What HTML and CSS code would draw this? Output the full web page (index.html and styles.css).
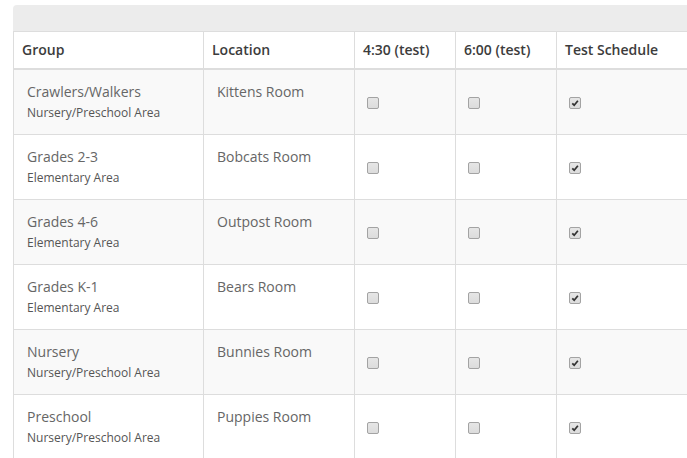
FILE: index.html
```html
<!DOCTYPE html>
<html>
<head>
<meta charset="utf-8">
<link rel="stylesheet" href="styles.css">
</head>
<body>
<div class="panel">
  <div class="panel-head"></div>
  <table class="grid">
    <colgroup>
      <col class="c-group"><col class="c-loc"><col class="c-time"><col class="c-time"><col class="c-test">
    </colgroup>
    <thead>
      <tr><th>Group</th><th>Location</th><th>4:30 (test)</th><th>6:00 (test)</th><th>Test Schedule</th></tr>
    </thead>
    <tbody>
      <tr class="odd">
        <td><div class="name">Crawlers/Walkers</div><div class="area">Nursery/Preschool Area</div></td>
        <td><div class="name">Kittens Room</div></td>
        <td class="chk"><span class="box"></span></td>
        <td class="chk"><span class="box"></span></td>
        <td class="chk"><span class="box on"><svg viewBox="0 0 10 10"><path d="M1.6 5.4 L4 7.8 L8.6 2.2" /></svg></span></td>
      </tr>
      <tr>
        <td><div class="name">Grades 2-3</div><div class="area">Elementary Area</div></td>
        <td><div class="name">Bobcats Room</div></td>
        <td class="chk"><span class="box"></span></td>
        <td class="chk"><span class="box"></span></td>
        <td class="chk"><span class="box on"><svg viewBox="0 0 10 10"><path d="M1.6 5.4 L4 7.8 L8.6 2.2" /></svg></span></td>
      </tr>
      <tr class="odd">
        <td><div class="name">Grades 4-6</div><div class="area">Elementary Area</div></td>
        <td><div class="name">Outpost Room</div></td>
        <td class="chk"><span class="box"></span></td>
        <td class="chk"><span class="box"></span></td>
        <td class="chk"><span class="box on"><svg viewBox="0 0 10 10"><path d="M1.6 5.4 L4 7.8 L8.6 2.2" /></svg></span></td>
      </tr>
      <tr>
        <td><div class="name">Grades K-1</div><div class="area">Elementary Area</div></td>
        <td><div class="name">Bears Room</div></td>
        <td class="chk"><span class="box"></span></td>
        <td class="chk"><span class="box"></span></td>
        <td class="chk"><span class="box on"><svg viewBox="0 0 10 10"><path d="M1.6 5.4 L4 7.8 L8.6 2.2" /></svg></span></td>
      </tr>
      <tr class="odd">
        <td><div class="name">Nursery</div><div class="area">Nursery/Preschool Area</div></td>
        <td><div class="name">Bunnies Room</div></td>
        <td class="chk"><span class="box"></span></td>
        <td class="chk"><span class="box"></span></td>
        <td class="chk"><span class="box on"><svg viewBox="0 0 10 10"><path d="M1.6 5.4 L4 7.8 L8.6 2.2" /></svg></span></td>
      </tr>
      <tr>
        <td><div class="name">Preschool</div><div class="area">Nursery/Preschool Area</div></td>
        <td><div class="name">Puppies Room</div></td>
        <td class="chk"><span class="box"></span></td>
        <td class="chk"><span class="box"></span></td>
        <td class="chk"><span class="box on"><svg viewBox="0 0 10 10"><path d="M1.6 5.4 L4 7.8 L8.6 2.2" /></svg></span></td>
      </tr>
    </tbody>
  </table>
</div>
</body>
</html>
```
FILE: styles.css
```css
html, body {
  margin: 0;
  padding: 0;
  overflow: hidden;
  background: #fff;
}
body {
  font-family: "Open Sans", "Liberation Sans", sans-serif;
  font-size: 14px;
  color: #333;
}
.panel {
  margin: 5px 0 0 13px;
  width: 720px;
}
.panel-head {
  height: 26px;
  background: #ececec;
  border-top-left-radius: 4px;
}
.grid {
  border-collapse: collapse;
  table-layout: fixed;
  width: 720px;
}
.c-group { width: 190px; }
.c-loc { width: 151px; }
.c-time { width: 101px; }
.c-test { width: 177px; }
.grid th {
  text-align: left;
  font-weight: 600;
  color: #3c3c3c;
  line-height: 20px;
  padding: 8px;
  border: 1px solid #ddd;
  border-bottom: 2px solid #ddd;
}
.grid td {
  height: 40px;
  padding: 12px 12px 12px 13px;
  vertical-align: top;
  border: 1px solid #ddd;
}
.grid tr.odd td { background: #f9f9f9; }
.name {
  color: #666;
  line-height: 20px;
}
.area {
  color: #555;
  font-size: 12px;
  line-height: 18px;
  padding-top: 2px;
}
.grid td.chk {
  vertical-align: middle;
  padding: 13px 11px 11px 12px;
}
.box {
  display: block;
  width: 10px;
  height: 10px;
  border: 1px solid #a3a3a3;
  border-radius: 2px;
  background: linear-gradient(#e6e6e6, #dcdcdc);
  position: relative;
}
.box svg {
  position: absolute;
  left: 1px;
  top: 1px;
  width: 8px;
  height: 8px;
}
.box svg path {
  fill: none;
  stroke: #333;
  stroke-width: 2.2;
}
```
